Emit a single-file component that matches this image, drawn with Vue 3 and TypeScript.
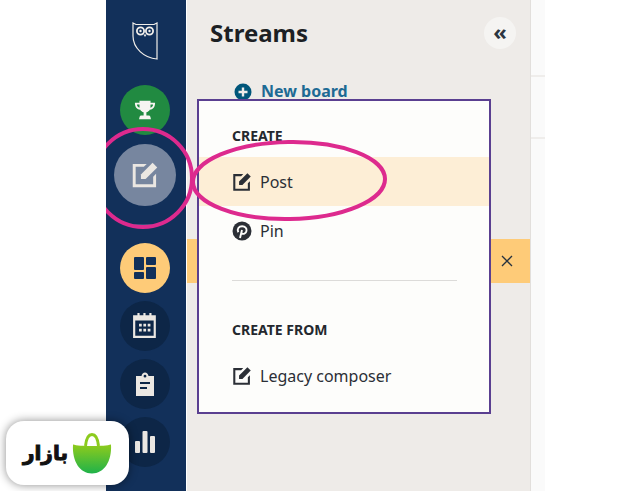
<template>
  <div class="page">
    <nav class="rail">
      <svg class="owl" viewBox="0 0 26 38" width="26" height="38" fill="none" stroke="#f1eeea" stroke-width="1.2">
        <path d="M1 1l3 1.500h18l3-1.500v36C12 36 1 26 1 14z" />
        <circle cx="8.500" cy="9" r="3.600" stroke-width="1.800" />
        <circle cx="17.500" cy="9" r="3.600" stroke-width="1.800" />
        <circle cx="8.500" cy="9" r="1.200" fill="#f1eeea" stroke="none" />
        <circle cx="17.500" cy="9" r="1.200" fill="#f1eeea" stroke="none" />
        <path d="M11.500 12.500h3l-1.500 2.500z" fill="#f1eeea" stroke="none" />
      </svg>
      <button class="circle trophy">
        <svg viewBox="0 0 24 24" width="22" height="22" fill="#f7f5f2">
          <path d="M6 2h12v2h5c0 4-1.500 7-5.800 7.800-.8 1.400-2.100 2.400-3.700 2.700v3.500h2.500c1 0 1.800.6 2 2l.5 2H5.500l.5-2c.2-1.400 1-2 2-2h2.500v-3.500c-1.600-.3-2.900-1.300-3.700-2.700C2.500 11 1 8 1 4h5zM3.200 6c.2 1.800 1 3 2.900 3.600L6 6zM20.800 6H18l-.1 3.600c1.900-.6 2.700-1.800 2.900-3.600z" />
        </svg>
      </button>
      <button class="circle compose">
        <svg viewBox="0 0 24 24" width="28" height="28" fill="#ebe7e2">
          <path d="M1.500 2.500h12L11 5H4v15h15v-6.500l2.500-2.500V22.500h-20z" />
          <path d="M8.500 15.500v-4L18.500 1.500l4 4L12.500 15.500z" />
        </svg>
      </button>
      <div class="rail-sep"></div>
      <button class="circle boards">
        <svg viewBox="0 0 24 24" width="24" height="24" fill="#12305a">
          <rect x="1" y="1" width="10" height="13" rx="1" />
          <rect x="13" y="1" width="10" height="8" rx="1" />
          <rect x="1" y="16" width="10" height="7" rx="1" />
          <rect x="13" y="11" width="10" height="12" rx="1" />
        </svg>
      </button>
      <button class="circle dark">
        <svg viewBox="0 0 24 24" width="26" height="26" fill="#ebe7e2">
          <path fill-rule="evenodd" d="M5 0h2v2h3.500V0h2v2H16V0h2v2h4v21H1V2h4zM3 7v14h17V7z" />
          <path d="M6.500 10h2.500v2.500H6.500zM10.500 10H13v2.500h-2.500zM14.500 10H17v2.500h-2.500zM6.500 14.500h2.500V17H6.500zM10.500 14.500H13V17h-2.500zM14.500 14.500H17V17h-2.500z" />
        </svg>
      </button>
      <button class="circle dark">
        <svg viewBox="0 0 24 24" width="24" height="24" fill="#ebe7e2">
          <path fill-rule="evenodd" d="M3 4h5.500c.4-2 1.800-3.500 3.500-3.500S15.100 2 15.500 4H21v20H3zM12 2.800a1.400 1.400 0 100 2.800 1.400 1.400 0 000-2.800zM7 10v2h10v-2zM7 15v2h7v-2z" />
        </svg>
      </button>
      <button class="circle dark">
        <svg viewBox="0 0 24 24" width="24" height="24" fill="#ebe7e2">
          <rect x="2" y="11" width="5" height="12" rx="1" />
          <rect x="9.500" y="1" width="5" height="22" rx="1" />
          <rect x="17" y="6" width="5" height="17" rx="1" />
        </svg>
      </button>
    </nav>

    <section class="panel">
      <header class="panel-head">
        <h1>Streams</h1>
        <button class="collapse">«</button>
      </header>
      <a class="new-board">
        <svg viewBox="0 0 18 18" width="18" height="18">
          <circle cx="9" cy="9" r="8.500" fill="#00567a" />
          <path d="M9 4.500v9M4.500 9h9" stroke="#eeebe8" stroke-width="2.400" />
        </svg>
        New board
      </a>
      <div class="banner">
        <svg viewBox="0 0 12 12" width="12" height="12" fill="none" stroke="#26323f" stroke-width="1.300">
          <path d="M1 1l10 10M11 1L1 11" />
        </svg>
      </div>
    </section>

    <aside class="behind">
      <div class="behind-row"></div>
      <div class="behind-row"></div>
    </aside>

    <div class="menu">
      <h2>CREATE</h2>
      <div class="item active">
        <svg viewBox="0 0 24 24" width="20" height="20" fill="#2b2f36">
          <path d="M1.500 2.500h12L11 5H4v15h15v-6.500l2.500-2.500V22.500h-20z" />
          <path d="M8.500 15.500v-4L18.500 1.500l4 4L12.500 15.500z" />
        </svg>
        Post
      </div>
      <div class="item">
        <svg viewBox="0 0 20 20" width="20" height="20">
          <circle cx="10" cy="10" r="9.500" fill="#2b2f36" />
          <path d="M8 17l2-8M6.300 11.200c-1.600-3 .4-6 3.900-6 3 0 4.700 2 4.300 4.600-.4 2.600-3.400 4.100-5.300 2.200" fill="none" stroke="#fdfdfb" stroke-width="1.900" />
        </svg>
        Pin
      </div>
      <hr />
      <h2 class="from">CREATE FROM</h2>
      <div class="item">
        <svg viewBox="0 0 24 24" width="20" height="20" fill="#2b2f36">
          <path d="M1.500 2.500h12L11 5H4v15h15v-6.500l2.500-2.500V22.500h-20z" />
          <path d="M8.500 15.500v-4L18.500 1.500l4 4L12.500 15.500z" />
        </svg>
        Legacy composer
      </div>
    </div>

    <svg class="marks" viewBox="0 0 642 491" width="642" height="491" fill="none" stroke="#dd2a8e" stroke-width="4">
      <defs>
        <clipPath id="railClip"><rect x="106" y="100" width="100" height="150" /></clipPath>
      </defs>
      <ellipse cx="143" cy="178" rx="49" ry="49" clip-path="url(#railClip)" />
      <ellipse cx="289" cy="180.500" rx="96" ry="38.500" transform="rotate(-1 289 180)" />
    </svg>

    <div class="badge">
      <span class="badge-name">بازار</span>
      <svg viewBox="0 0 40 41" width="40" height="41">
        <defs>
          <linearGradient id="bagFill" x1="0" y1="0" x2="0" y2="1">
            <stop offset="0" stop-color="#8fcb1c" />
            <stop offset="1" stop-color="#1fb24a" />
          </linearGradient>
        </defs>
        <path d="M13.500 13c.8-8 3-11.500 6.500-11.500s5.700 3.500 6.500 11.500" fill="none" stroke="#8ccb1e" stroke-width="3" />
        <path d="M1 11.500C7 13.500 33 13.500 39 11.500c1 17-7 29-19 29S0 28.500 1 11.500z" fill="url(#bagFill)" />
      </svg>
    </div>
  </div>
</template>

<script setup lang="ts">
</script>

<style>
html,
body {
  margin: 0;
  background: #fff;
}
</style>

<style scoped>
.page {
  position: relative;
  display: flex;
  width: 642px;
  height: 491px;
  padding-left: 106px;
  box-sizing: border-box;
  overflow: hidden;
  font-family: "Noto Sans", sans-serif;
  color: #24282e;
}

.rail {
  display: flex;
  flex-direction: column;
  align-items: center;
  gap: 8px;
  width: 80px;
  padding: 22px 2px 0 0;
  box-sizing: border-box;
  background: #12305a;
}

.owl {
  margin-bottom: 17px;
}

.circle {
  display: flex;
  flex-shrink: 0;
  align-items: center;
  justify-content: center;
  width: 50px;
  height: 50px;
  padding: 0;
  border: 0;
  border-radius: 50%;
}

.trophy {
  background: #218a41;
}

.compose {
  width: 62px;
  height: 62px;
  margin-top: 1px;
  background: #77869f;
}

.rail-sep {
  width: 24px;
  height: 1px;
  margin: 10px 0 10px;
  background: #33507a;
}

.boards {
  background: #fecb78;
}

.dark {
  background: #0d2647;
}

.panel {
  position: relative;
  width: 344px;
  margin-left: 1px;
  box-sizing: border-box;
  background: #eeebe8;
  border-right: 1px solid #e2dfdc;
}

.panel-head {
  display: flex;
  align-items: center;
  justify-content: space-between;
  padding: 17px 14px 0 23px;
}

h1 {
  margin: 0;
  font-size: 24px;
  font-weight: 700;
  line-height: 32px;
  color: #1c1f24;
}

.collapse {
  width: 32px;
  height: 32px;
  padding: 0 0 4px;
  border: 0;
  border-radius: 50%;
  background: #f5f4f2;
  font-family: "Noto Sans", sans-serif;
  font-size: 22px;
  font-weight: 700;
  line-height: 1;
  color: #2b3540;
}

.new-board {
  display: flex;
  align-items: center;
  gap: 9px;
  margin: 26px 0 0 47px;
  font-size: 16px;
  font-weight: 700;
  line-height: 33px;
  color: #1d6a94;
}

.banner {
  display: flex;
  align-items: center;
  justify-content: flex-end;
  height: 44px;
  margin-top: 131px;
  padding-right: 17px;
  background: #fecb78;
}

.behind {
  width: 14px;
  padding-top: 75px;
  background: #fafafa;
}

.behind-row {
  height: 60px;
  border-top: 2px solid #efedeb;
}

.menu {
  position: absolute;
  left: 197px;
  top: 99px;
  width: 294px;
  height: 315px;
  box-sizing: border-box;
  padding-top: 25px;
  border: 2px solid #5a3f90;
  background: #fdfdfb;
}

h2 {
  margin: 0 0 11px 33px;
  font-size: 14px;
  font-weight: 700;
  line-height: 20px;
  color: #24282e;
}

.from {
  margin-top: 39px;
  margin-bottom: 11px;
}

.item {
  display: flex;
  align-items: center;
  gap: 8px;
  height: 49px;
  padding-left: 33px;
  font-size: 16px;
  color: #2b2f36;
}

.active {
  background: #fdeed6;
}

hr {
  height: 1px;
  margin: 25px 32px 0 33px;
  border: 0;
  background: #dcdbd9;
}

.marks {
  position: absolute;
  left: 0;
  top: 0;
  pointer-events: none;
}

.badge {
  position: absolute;
  left: 6px;
  top: 421px;
  display: flex;
  align-items: center;
  justify-content: space-between;
  width: 123px;
  height: 64px;
  box-sizing: border-box;
  padding: 0 17px;
  border-radius: 18px;
  background: #fff;
  box-shadow: 0 0 10px rgba(0, 0, 0, 0.45);
}

.badge-name {
  font-family: "DejaVu Sans", sans-serif;
  font-size: 20px;
  font-weight: 700;
  color: #111;
  -webkit-text-stroke: 1px #111;
}
</style>
